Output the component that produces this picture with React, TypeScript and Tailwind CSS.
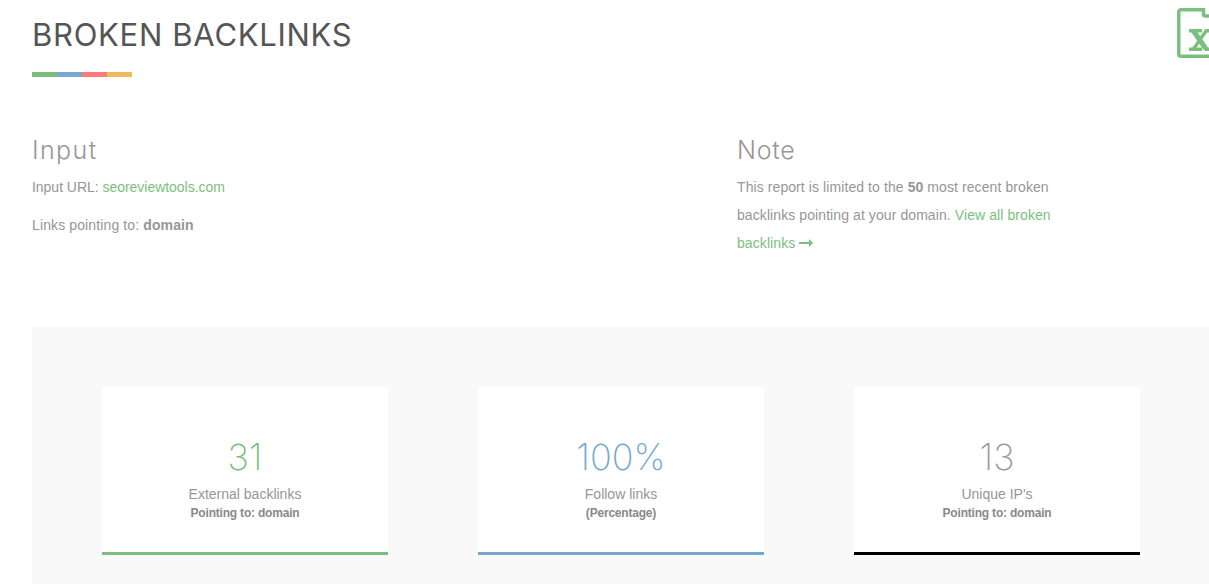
const font = "font-['Inter','Open_Sans',sans-serif]";

const stats = [
  { value: "31", label: "External backlinks", sub: "Pointing to: domain", color: "text-[#7abf7d]", line: "border-[#7abf7d]" },
  { value: "100%", label: "Follow links", sub: "(Percentage)", color: "text-[#74a9d2]", line: "border-[#6fa8d0]" },
  { value: "13", label: "Unique IP's", sub: "Pointing to: domain", color: "text-[#a09c93]", line: "border-black" },
];

function ExcelIcon() {
  return (
    <svg width="60" height="52" viewBox="0 0 60 52" fill="none" className="mt-2 shrink-0">
      <path d="M26.5 1.75H4A2.25 2.25 0 0 0 1.75 4v42A2.25 2.25 0 0 0 4 48.25h56" stroke="#7abf7d" strokeWidth="3.5" />
      <path d="M26.5 0v6a2 2 0 0 0 2 2H44" stroke="#7abf7d" strokeWidth="3.5" />
      <path d="M12 22.75h13M12 41.25h13M28 22.75h12M28 41.25h12" stroke="#7abf7d" strokeWidth="3.5" />
      <path d="M16.5 23l12.5 18" stroke="#7abf7d" strokeWidth="5" />
      <path d="M29 23L16.5 41" stroke="#7abf7d" strokeWidth="3.5" />
    </svg>
  );
}

export default function App() {
  return (
    <div className="w-[1209px] h-[584px] overflow-hidden bg-white font-['Liberation_Sans',Arial,sans-serif] text-[14px] text-[#9a9596]">
      <div className="w-[1260px] pl-8">
        {/* Header */}
        <div className="flex justify-between items-start h-[77px]">
          <div>
            <h1 className={`${font} pt-[15px] text-[31px] leading-[40px] font-normal tracking-[0.7px] text-[#555555]`}>BROKEN BACKLINKS</h1>
            <div className="flex mt-[17px] h-[5px] w-[100px]">
              <span className="flex-1 bg-[#7abf7d]" />
              <span className="flex-1 bg-[#74a9d0]" />
              <span className="flex-1 bg-[#ff7b7b]" />
              <span className="flex-1 bg-[#ecbb5e]" />
            </div>
          </div>
          <div className="mr-[23px]">
            <ExcelIcon />
          </div>
        </div>

        {/* Input and note */}
        <div className="flex mt-[56px] h-[194px]">
          <div className="w-[705px]">
            <h2 className={`${font} text-[25px] leading-[34px] font-light tracking-[1.4px] text-[#9a9596]`}>Input</h2>
            <p className="mt-[10px] leading-[20px] tracking-[-0.03px]">
              Input URL: <a className="text-[#7abf7d]">seoreviewtools.com</a>
            </p>
            <p className="mt-[18px] leading-[20px] tracking-[0.12px]">
              Links pointing to: <b>domain</b>
            </p>
          </div>
          <div className="w-[330px]">
            <h2 className={`${font} text-[25px] leading-[34px] font-light tracking-[0.75px] text-[#9a9596]`}>Note</h2>
            <p className="mt-[6px] leading-[28px] tracking-[0.085px]">
              This report is limited to the <b>50</b> most recent broken backlinks pointing at your domain.{" "}
              <a className="text-[#7abf7d]">
                View all broken backlinks{" "}
                <svg width="14" height="8" viewBox="0 0 14 8" className="inline align-[1px]">
                  <path d="M0 3h10V0l4 4-4 4V5H0z" fill="#7abf7d" />
                </svg>
              </a>
            </p>
          </div>
        </div>

        {/* Stats panel */}
        <div className="bg-[#f9f9f9] pt-[60px] pl-[70px] pb-[40px]">
          <div className="flex gap-[90px]">
            {stats.map((s) => (
              <div key={s.value} className={`w-[286px] h-[168px] bg-white border-b-[3px] ${s.line} flex flex-col items-center pt-[50px]`}>
                <div className={`${font} text-[36px] leading-[40px] font-extralight ${s.color}`}>{s.value}</div>
                <div className="mt-[7px] leading-[20px]">{s.label}</div>
                <div className="mt-[1px] text-[12px] leading-[16px] font-bold tracking-[-0.2px] text-[#8c8788]">{s.sub}</div>
              </div>
            ))}
          </div>
        </div>
      </div>
    </div>
  );
}
